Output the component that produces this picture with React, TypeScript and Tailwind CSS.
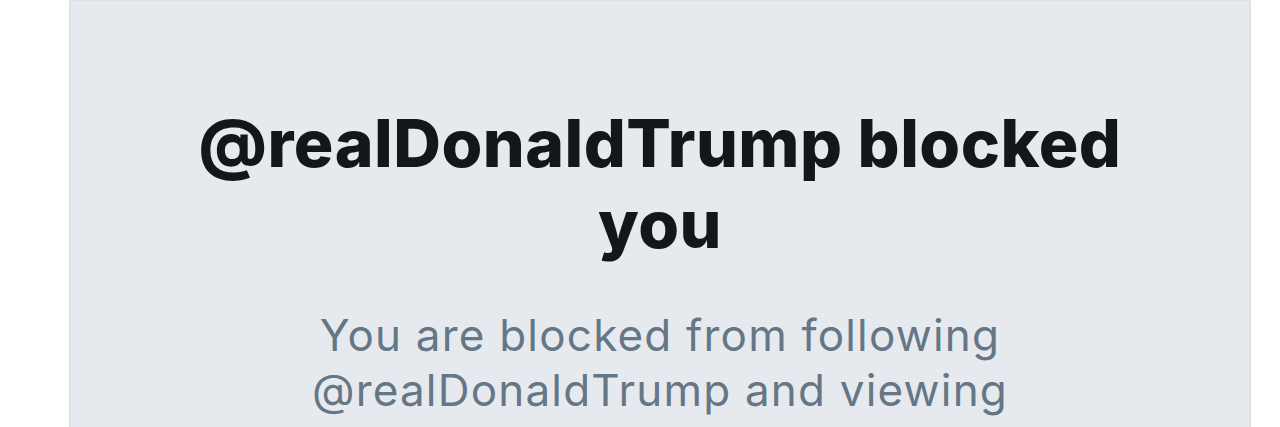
export default function App() {
  return (
    <div className="h-[427px] w-full overflow-hidden bg-white">
      <div className="ml-[69px] h-full w-[1182px] border-x-2 border-t border-[#dde1e5] bg-[#e6eaee] pt-[102px] text-center font-['Inter','Noto_Sans',sans-serif]">
        <h1 className="mx-auto w-[980px] text-[66px] leading-[81px] font-extrabold tracking-[0.5px] text-[#14171a]">
          @realDonaldTrump blocked you
        </h1>
        <p className="mx-auto mt-[43px] w-[760px] text-[44px] leading-[55px] tracking-[1.2px] text-[#657786]">
          You are blocked from following @realDonaldTrump and viewing
        </p>
      </div>
    </div>
  );
}
